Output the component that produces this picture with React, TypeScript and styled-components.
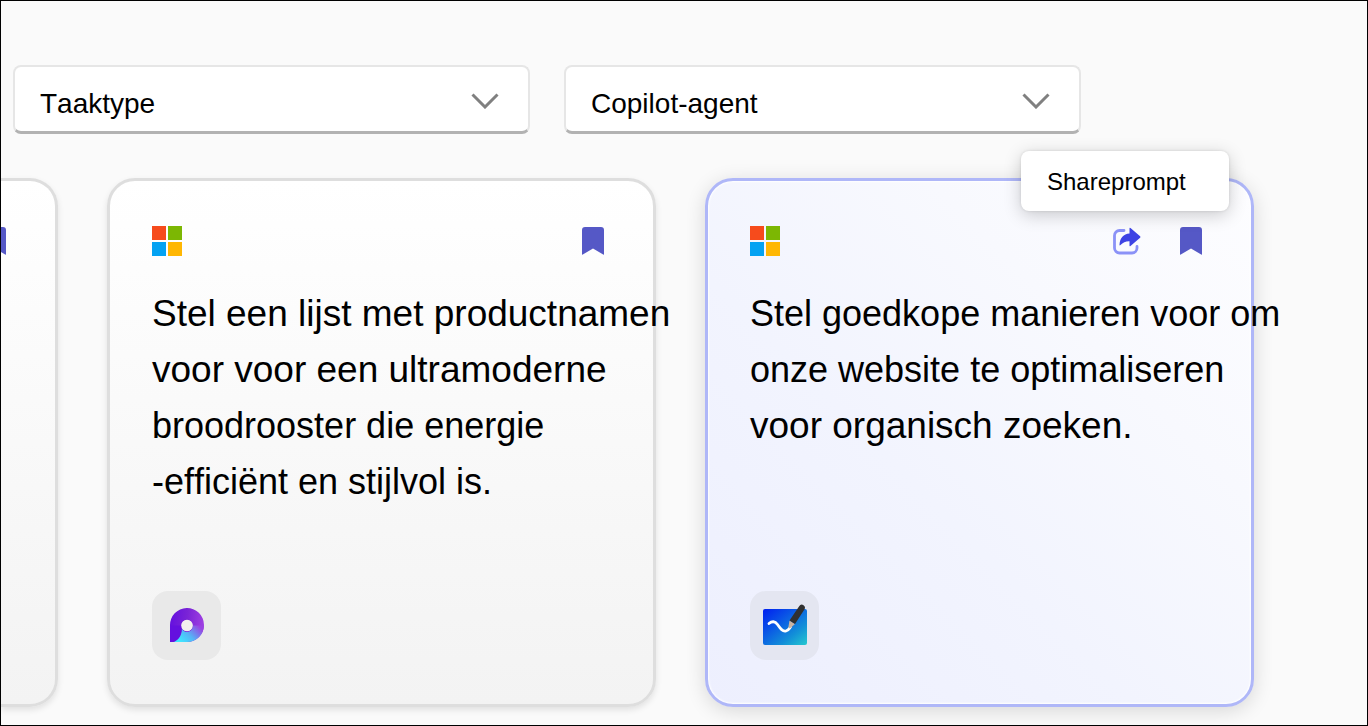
import React from "react";
import styled, { createGlobalStyle, css } from "styled-components";

const GlobalStyle = createGlobalStyle`
  *, *::before, *::after { box-sizing: border-box; }
  body {
    margin: 0;
    background: #fafafa;
    color: #000;
    font-family: "Liberation Sans", Arial, sans-serif;
    font-kerning: none;
  }
`;

const Page = styled.main`
  min-height: 100vh;
  padding: 64px 0 18px;
  border: 1px solid #000;
  background: #fafafa;
  overflow: hidden;
`;

const Filters = styled.div`
  display: grid;
  grid-template-columns: 1fr 1fr;
  gap: 34px;
  padding: 0 286px 0 12px;
  margin-bottom: 44px;
`;

const FilterField = styled.label`
  display: grid;
  align-items: center;

  & > * {
    grid-area: 1 / 1;
  }

  & > svg {
    justify-self: end;
    margin-right: 31px;
    pointer-events: none;
  }
`;

const FilterSelect = styled.select`
  appearance: none;
  width: 100%;
  height: 69px;
  padding: 10px 72px 0 25px;
  border: 2px solid #e6e6e6;
  border-bottom: 3px solid #b2b2b2;
  border-radius: 8px;
  background: #fff;
  color: #000;
  font-family: inherit;
  font-size: 28px;
  font-kerning: none;
  line-height: 32px;
`;

const CardGrid = styled.div`
  display: grid;
  grid-template-columns: 57px 1fr 1fr;
  gap: 49px;
  padding-right: 113px;
`;

const Card = styled.article<{ $active?: boolean; $cut?: boolean }>`
  display: flex;
  flex-direction: column;
  min-width: 0;
  padding: 44px 49px 44px 42px;
  border: 3px solid #dedede;
  border-radius: 28px;
  background: linear-gradient(#fff, #f3f3f3);
  background-clip: padding-box;
  box-shadow: 0 3px 6px rgba(0, 0, 0, 0.1);

  ${(p) =>
    p.$active &&
    css`
      border-color: #afb7f8;
      background: linear-gradient(45deg, #edeffe 0%, #f2f4fe 40%, #f8f9fe 70%, #fdfdff 100%);
      box-shadow: 0 4px 20px rgba(0, 0, 0, 0.14), inset 0 0 2px 1px #fff;
    `}

  ${(p) =>
    p.$cut &&
    css`
      padding-left: 0;
      border-left: 0;
      border-radius: 0 28px 28px 0;
    `}
`;

const CardHeader = styled.header`
  display: flex;
  align-items: center;
  height: 31px;
  margin-bottom: 30px;
`;

const Actions = styled.div`
  display: flex;
  justify-content: flex-end;
  flex: 1;
  min-width: 0;
  gap: 39px;
`;

const IconButton = styled.button`
  display: block;
  flex: none;
  padding: 0;
  border: 0;
  background: none;
  cursor: pointer;

  & > svg {
    display: block;
  }
`;

const TooltipAnchor = styled.div`
  position: relative;
`;

const Tooltip = styled.div`
  position: absolute;
  right: -88px;
  bottom: 44px;
  width: 208px;
  padding: 15px 26px 13px;
  border-radius: 8px;
  background: #fff;
  box-shadow: 0 4px 18px rgba(0, 0, 0, 0.2), 0 0 3px rgba(0, 0, 0, 0.12);
  font-size: 24px;
  line-height: 32px;
  white-space: nowrap;
`;

const Prompt = styled.p`
  margin: 0 0 81px;
  line-height: 56px;
  white-space: nowrap;
`;

const PromptLine = styled.span<{ $large?: boolean }>`
  display: block;
  height: 56px;
  font-size: ${(p) => (p.$large ? 37 : 36)}px;
`;

const AppTile = styled.div<{ $tint?: boolean }>`
  display: grid;
  place-items: center;
  width: 69px;
  height: 69px;
  margin-top: auto;
  border-radius: 16px;
  background: ${(p) => (p.$tint ? "#e4e6f1" : "#e9e9e9")};
`;

function Chevron() {
  return (
    <svg width="28" height="18" viewBox="0 0 28 18" fill="none" aria-hidden="true">
      <path d="M1.500 3.500 14 16 26.500 3.500" stroke="#808080" strokeWidth="3" />
    </svg>
  );
}

function MicrosoftLogo() {
  return (
    <svg width="30" height="30" viewBox="0 0 30 30" role="img" aria-label="Microsoft">
      <rect width="14" height="14" fill="#f64b1c" />
      <rect x="16" width="14" height="14" fill="#7cb703" />
      <rect y="16" width="14" height="14" fill="#04a2f2" />
      <rect x="16" y="16" width="14" height="14" fill="#ffb703" />
    </svg>
  );
}

function BookmarkButton() {
  return (
    <IconButton type="button" aria-label="Bladwijzer">
      <svg width="22" height="28" viewBox="0 0 22 28" aria-hidden="true">
        <path
          d="M3 0h16q3 0 3 3v24.300q0 .8-.8.3L11 21.500.8 27.600q-.8.5-.8-.3V3q0-3 3-3Z"
          fill="#5558c6"
        />
      </svg>
    </IconButton>
  );
}

function ShareIcon() {
  return (
    <svg width="28" height="28" viewBox="0 0 28 28" fill="none" aria-hidden="true">
      <path
        d="M11 3.500H6.500a5 5 0 0 0-5 5V21a5 5 0 0 0 5 5H19a5 5 0 0 0 5-5v-1.500"
        stroke="#8b92f7"
        strokeWidth="2.800"
        strokeLinecap="round"
      />
      <path
        d="M16.500 1.500v5C10.500 7 7 11 6.500 17.500q0 1.500 1 .5 3.500-4 9-3.800v4.300q0 1.200 1 .4l9.600-8.200q.8-.7 0-1.400l-9.600-8.200q-1-.8-1 .4Z"
        fill="#3d43e4"
      />
    </svg>
  );
}

function LoopIcon() {
  return (
    <svg width="35" height="35" viewBox="0 0 35 35" role="img" aria-label="Loop">
      <defs>
        <linearGradient id="loopRing" x1="0" y1="0.300" x2="1" y2="0.400">
          <stop offset="0" stopColor="#6410df" />
          <stop offset="0.500" stopColor="#7a24d6" />
          <stop offset="1" stopColor="#a040e2" />
        </linearGradient>
        <linearGradient id="loopBase" gradientUnits="userSpaceOnUse" x1="12" y1="34" x2="29" y2="17">
          <stop offset="0" stopColor="#3fe6ff" />
          <stop offset="0.450" stopColor="#55b4f6" />
          <stop offset="1" stopColor="#9a42e2" />
        </linearGradient>
      </defs>
      <path
        fillRule="evenodd"
        d="M1 34V17.500A17 17 0 1 1 18 34ZM18 12a5.500 5.500 0 1 0 0 11 5.500 5.500 0 0 0 0-11Z"
        fill="url(#loopRing)"
      />
      <path
        d="M5 34c6-3 7.500-7 8-13.500A5.500 5.500 0 0 0 23.500 17.500H35A17 17 0 0 1 18 34Z"
        fill="url(#loopBase)"
      />
      <path d="M1 17.500h11.500V21C12.500 28 8 34 1 34Z" fill="#6410df" />
      <circle cx="18" cy="17.500" r="5.700" fill="#f2efee" />
    </svg>
  );
}

function WhiteboardIcon() {
  return (
    <svg width="48" height="48" viewBox="0 0 48 48" role="img" aria-label="Whiteboard">
      <defs>
        <linearGradient id="board" x1="0" y1="0" x2="1" y2="1">
          <stop offset="0" stopColor="#001ff0" />
          <stop offset="0.350" stopColor="#0a55e6" />
          <stop offset="0.700" stopColor="#128fd8" />
          <stop offset="1" stopColor="#25c9cf" />
        </linearGradient>
      </defs>
      <rect x="2" y="7" width="44" height="36" rx="2" fill="url(#board)" />
      <path
        d="M8 21.500c3-2.500 6-2.500 8.500 1s5 7.500 8.500 6.500c2.500-.8 3-2 4.500-4"
        stroke="#fff"
        strokeWidth="2.800"
        strokeLinecap="round"
        fill="none"
      />
      <path d="m27.500 24.500 1-6 5.500 3.500-4.800 4.200q-2 .6-1.700-1.700Z" fill="#c9b3a2" />
      <path d="m28.500 18.500 9.500-14q1.800-3 4.500-1.300 2.600 1.700.7 4.500L34 22Z" fill="#303030" />
    </svg>
  );
}

export default function App() {
  return (
    <>
      <GlobalStyle />
      <Page>
        <Filters>
          <FilterField>
            <FilterSelect aria-label="Taaktype">
              <option>Taaktype</option>
            </FilterSelect>
            <Chevron />
          </FilterField>
          <FilterField>
            <FilterSelect aria-label="Copilot-agent">
              <option>Copilot-agent</option>
            </FilterSelect>
            <Chevron />
          </FilterField>
        </Filters>

        <CardGrid>
          <Card $cut>
            <CardHeader>
              <Actions>
                <BookmarkButton />
              </Actions>
            </CardHeader>
          </Card>

          <Card>
            <CardHeader>
              <MicrosoftLogo />
              <Actions>
                <BookmarkButton />
              </Actions>
            </CardHeader>
            <Prompt>
              <PromptLine $large>Stel een lijst met productnamen</PromptLine>
              <PromptLine $large>voor voor een ultramoderne</PromptLine>
              <PromptLine>broodrooster die energie</PromptLine>
              <PromptLine>-efficiënt en stijlvol is.</PromptLine>
            </Prompt>
            <AppTile>
              <LoopIcon />
            </AppTile>
          </Card>

          <Card $active>
            <CardHeader>
              <MicrosoftLogo />
              <Actions>
                <TooltipAnchor>
                  <IconButton type="button" aria-describedby="share-tip" aria-label="Delen">
                    <ShareIcon />
                  </IconButton>
                  <Tooltip role="tooltip" id="share-tip">
                    Shareprompt
                  </Tooltip>
                </TooltipAnchor>
                <BookmarkButton />
              </Actions>
            </CardHeader>
            <Prompt>
              <PromptLine>Stel goedkope manieren voor om</PromptLine>
              <PromptLine>onze website te optimaliseren</PromptLine>
              <PromptLine $large>voor organisch zoeken.</PromptLine>
            </Prompt>
            <AppTile $tint>
              <WhiteboardIcon />
            </AppTile>
          </Card>
        </CardGrid>
      </Page>
    </>
  );
}
